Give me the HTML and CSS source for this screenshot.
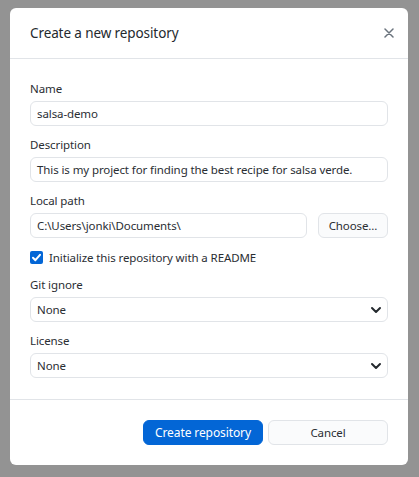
FILE: index.html
```html
<!DOCTYPE html>
<html lang="en">
<head>
<meta charset="utf-8">
<title>Create a new repository</title>
<link rel="stylesheet" href="styles.css">
</head>
<body>
<div class="dialog">
  <div class="header">
    <h1 class="title">Create a new repository</h1>
    <svg class="close" width="10" height="10" viewBox="0 0 10 10"><path d="M1 1L9 9M9 1L1 9" stroke="#6a737d" stroke-width="1.5" stroke-linecap="round"/></svg>
  </div>
  <div class="content">
    <div class="field">
      <div class="label">Name</div>
      <div class="control">salsa-demo</div>
    </div>
    <div class="field">
      <div class="label">Description</div>
      <div class="control">This is my project for finding the best recipe for salsa verde.</div>
    </div>
    <div class="field">
      <div class="label">Local path</div>
      <div class="path-row">
        <div class="control grow">C:\Users\jonki\Documents\</div>
        <div class="btn choose">Choose...</div>
      </div>
    </div>
    <div class="check-row">
      <span class="checkbox"><svg width="13" height="13" viewBox="0 0 13 13"><path d="M3 6.8L5.4 9.2L10 3.8" fill="none" stroke="#fff" stroke-width="2" stroke-linecap="round" stroke-linejoin="round"/></svg></span>
      <span class="check-label">Initialize this repository with a README</span>
    </div>
    <div class="field">
      <div class="label">Git ignore</div>
      <div class="control select"><span>None</span><svg width="12" height="8" viewBox="0 0 12 8"><path d="M2 2L6 6L10 2" fill="none" stroke="#24292e" stroke-width="2" stroke-linecap="round" stroke-linejoin="round"/></svg></div>
    </div>
    <div class="field">
      <div class="label">License</div>
      <div class="control select"><span>None</span><svg width="12" height="8" viewBox="0 0 12 8"><path d="M2 2L6 6L10 2" fill="none" stroke="#24292e" stroke-width="2" stroke-linecap="round" stroke-linejoin="round"/></svg></div>
    </div>
  </div>
  <div class="footer">
    <div class="btn primary">Create repository</div>
    <div class="btn">Cancel</div>
  </div>
</div>
</body>
</html>
```
FILE: styles.css
```css
html, body {
  margin: 0;
  padding: 0;
}
body {
  background: #939393;
  width: 419px;
  height: 477px;
  overflow: hidden;
  font-family: "Noto Sans", "Open Sans", sans-serif;
  font-size: 11.5px;
  letter-spacing: -0.1px;
  color: #2a2e33;
}
.dialog {
  margin: 8px 0 0 10px;
  width: 398px;
  height: 457px;
  background: #fff;
  border-radius: 6px;
  display: flex;
  flex-direction: column;
  box-sizing: border-box;
}
.header {
  height: 51px;
  box-sizing: border-box;
  border-bottom: 1px solid #e1e4e8;
  display: flex;
  align-items: center;
  justify-content: space-between;
  padding: 0 14px 0 20px;
}
.title {
  margin: 0;
  font-size: 13.5px;
  font-weight: 400;
  color: #24292e;
}
.close {
  display: block;
}
.content {
  padding: 22px 20px 0 20px;
  display: flex;
  flex-direction: column;
  gap: 11px;
  height: 341px;
  box-sizing: border-box;
  border-bottom: 1px solid #e1e4e8;
}
.field {
  display: flex;
  flex-direction: column;
}
.label {
  line-height: 16px;
  margin-bottom: 4px;
}
.control {
  height: 25px;
  box-sizing: border-box;
  border: 1px solid #e1e4e8;
  border-radius: 6px;
  padding: 0 6px;
  display: flex;
  align-items: center;
  white-space: nowrap;
  overflow: hidden;
}
.path-row {
  display: flex;
  gap: 11px;
}
.grow {
  flex: 1;
}
.btn {
  height: 25px;
  box-sizing: border-box;
  border: 1px solid #e1e4e8;
  border-radius: 6px;
  background: #fafbfc;
  display: flex;
  align-items: center;
  justify-content: center;
  width: 120px;
}
.choose {
  width: 70px;
}
.check-row {
  display: flex;
  align-items: center;
  height: 17px;
  gap: 6px;
}
.checkbox {
  width: 13px;
  height: 13px;
  border-radius: 2px;
  background: #0366d6;
  display: flex;
}
.select {
  justify-content: space-between;
  padding-right: 5px;
}
.select svg {
  display: block;
}
.footer {
  flex: 1;
  display: flex;
  justify-content: flex-end;
  align-items: flex-start;
  gap: 5px;
  padding: 20px 20px 0 0;
}
.primary {
  background: #0366d6;
  border-color: #0366d6;
  color: #fff;
  font-size: 12px;
}
```
